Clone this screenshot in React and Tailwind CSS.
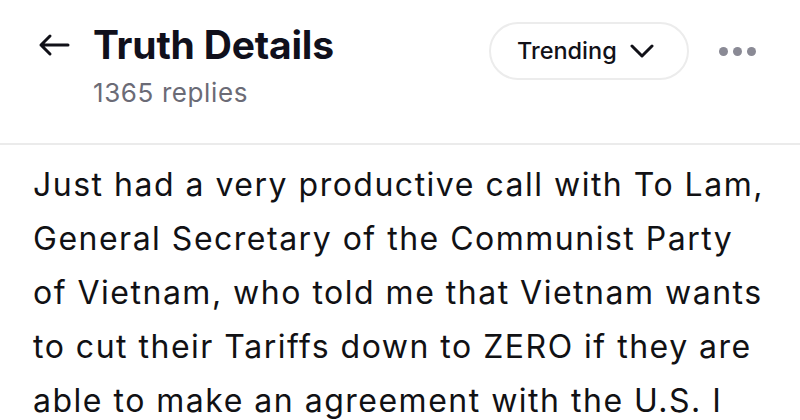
import React from "react";

const lines = [
  "Just had a very productive call with To Lam,",
  "General Secretary of the Communist Party",
  "of Vietnam, who told me that Vietnam wants",
  "to cut their Tariffs down to ZERO if they are",
  "able to make an agreement with the U.S. I",
];

const BackArrow = () => (
  <svg width="32" height="24" viewBox="0 0 32 24" fill="none">
    <path
      d="M30 12H3M12 3L3 12L12 21"
      stroke="#111118"
      strokeWidth="3"
      strokeLinecap="round"
      strokeLinejoin="round"
    />
  </svg>
);

const Chevron = () => (
  <svg width="24" height="14" viewBox="0 0 24 14" fill="none">
    <path
      d="M2 2L12 12L22 2"
      stroke="#111118"
      strokeWidth="3"
      strokeLinecap="round"
      strokeLinejoin="round"
    />
  </svg>
);

export default function App() {
  return (
    <div
      className="w-[800px] h-[420px] overflow-hidden bg-white"
      style={{ fontFamily: "Inter, 'Noto Sans', sans-serif" }}
    >
      <header className="h-[145px] flex items-start border-b-2 border-[#ebebeb] bg-white">
        <div className="pt-[33px] pl-[38px] w-[93px]">
          <BackArrow />
        </div>
        <div className="flex-1 pt-[22px]">
          <h1 className="text-[39px] leading-[46px] font-bold text-[#10101c] tracking-[-0.2px]">
            Truth Details
          </h1>
          <p className="mt-[9px] text-[26px] leading-[32px] tracking-[0.6px] text-[#6b6b76]">
            1365 replies
          </p>
        </div>
        <div className="flex items-center pt-[22px]">
          <button className="h-[58px] w-[200px] rounded-full border-2 border-[#ececec] flex items-center pl-[26px] gap-[13px]">
            <span className="text-[23.5px] font-medium text-[#111118]">Trending</span>
            <Chevron />
          </button>
          <div className="ml-[30px] mr-[44px] flex gap-[5px]">
            <span className="w-[9px] h-[9px] rounded-full bg-[#8a8a95]" />
            <span className="w-[9px] h-[9px] rounded-full bg-[#8a8a95]" />
            <span className="w-[9px] h-[9px] rounded-full bg-[#8a8a95]" />
          </div>
        </div>
      </header>
      <div className="pl-[33px] pt-[13px] text-[32px] leading-[54px] tracking-[1.5px] text-[#111114]">
        {lines.map((l) => (
          <div key={l} className="whitespace-nowrap">
            {l}
          </div>
        ))}
      </div>
    </div>
  );
}
